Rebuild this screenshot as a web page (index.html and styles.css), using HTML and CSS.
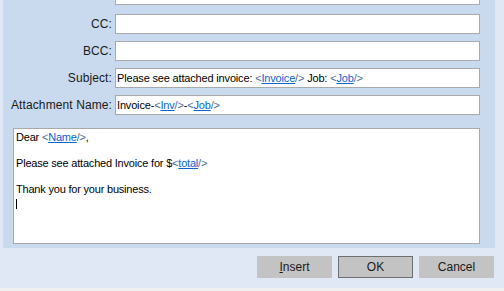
FILE: index.html
```html
<!DOCTYPE html>
<html>
<head>
    <title>Email Template</title>
    <link rel="stylesheet" href="styles.css">
</head>
<body>
    <div class="dialog">
        <div class="fields">
            <label class="field-label"></label>
            <div class="field first"></div>

            <label class="field-label">CC:</label>
            <div class="field"></div>

            <label class="field-label">BCC:</label>
            <div class="field"></div>

            <label class="field-label">Subject:</label>
            <div class="field">Please see attached invoice: <span class="tag">&lt;<a>Invoice</a>/&gt;</span> Job: <span class="tag">&lt;<a>Job</a>/&gt;</span></div>

            <label class="field-label">Attachment Name:</label>
            <div class="field">Invoice-<span class="tag">&lt;<a>Inv</a>/&gt;</span>-<span class="tag">&lt;<a>Job</a>/&gt;</span></div>
        </div>

        <div class="body-box">
            <div>Dear <span class="tag">&lt;<a>Name</a>/&gt;</span>,</div>
            <div>&nbsp;</div>
            <div>Please see attached Invoice for $<span class="tag">&lt;<a>total</a>/&gt;</span></div>
            <div>&nbsp;</div>
            <div>Thank you for your business.</div>
            <div><span class="caret"></span></div>
        </div>
    </div>

    <div class="button-row">
        <button class="btn"><u>I</u>nsert</button>
        <button class="btn default">OK</button>
        <button class="btn">Cancel</button>
    </div>
    <div class="status-strip"></div>
</body>
</html>
```

FILE: styles.css
```css
body {
    margin: 0;
    font-family: "Liberation Sans", Arial, sans-serif;
    font-size: 12px;
    color: #1a1a1a;
    background-color: #dfe8f4;
    width: 504px;
    height: 291px;
    overflow: hidden;
}
.dialog {
    margin-left: 3px;
    width: 492px;
    background-color: #c9daee;
    padding-bottom: 4px;
}
.fields {
    display: grid;
    grid-template-columns: 109px 365px;
    column-gap: 3px;
    row-gap: 7px;
    margin-top: -15px;
}
.field-label {
    text-align: right;
    line-height: 20px;
    letter-spacing: 0.1px;
}
.field {
    height: 18px;
    line-height: 18px;
    padding-left: 1px;
    border: 1px solid #a9a9a9;
    background: white;
    color: #000;
    font-size: 11px;
    letter-spacing: -0.17px;
    white-space: nowrap;
    overflow: hidden;
}
.field.first {
    margin-bottom: 2px;
}
.tag {
    color: #4b6a96;
}
.tag a {
    color: #0a64d0;
    text-decoration: underline;
}
.body-box {
    margin: 13px 0 0 10px;
    width: 461px;
    height: 112px;
    padding: 2px 2px 0 2px;
    border: 1px solid #a9a9a9;
    background: white;
    color: #000;
    font-size: 11px;
    letter-spacing: -0.2px;
    line-height: 13px;
}
.caret {
    display: inline-block;
    width: 1px;
    height: 10px;
    background: #000;
    vertical-align: -3px;
}
.button-row {
    display: flex;
    justify-content: flex-end;
    gap: 6px;
    padding: 8px 10px 0 0;
    height: 32px;
}
.btn {
    width: 75px;
    height: 22px;
    border: none;
    background-color: #c3c3c3;
    font-family: "Liberation Sans", Arial, sans-serif;
    font-size: 12px;
    color: #1a1a1a;
    padding: 0;
}
.btn.default {
    border: 1px solid #6e6e6e;
}
.status-strip {
    height: 3px;
    background-color: #f0f0f0;
}
```
